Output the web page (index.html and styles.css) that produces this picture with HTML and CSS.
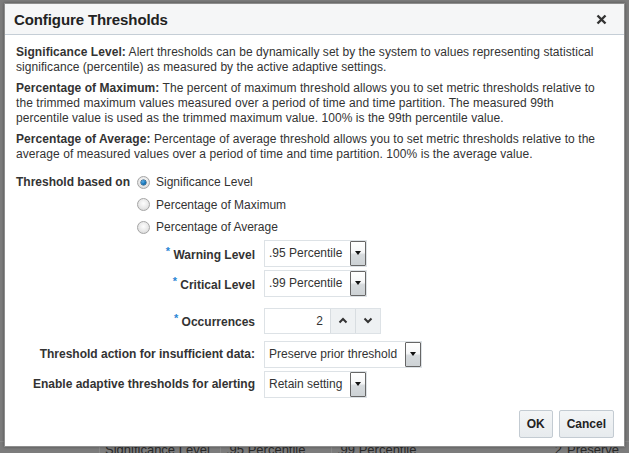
FILE: index.html
```html
<!DOCTYPE html>
<html>
<head>
<meta charset="utf-8">
<link rel="stylesheet" href="styles.css">
</head>
<body>
<div class="page">
  <div class="page-row">
    <span class="cell c1">Significance Level</span>
    <span class="cell c2">.95 Percentile</span>
    <span class="cell c3">.99 Percentile</span>
    <span class="cell c4">2</span>
    <span class="cell c5">Preserve</span>
  </div>
</div>
<div class="dialog">
  <div class="dlg-header">
    <span class="dlg-title">Configure Thresholds</span>
    <svg class="close" width="11" height="11" viewBox="0 0 11 11"><path d="M1.5 1.5 L9.5 9.5 M9.5 1.5 L1.5 9.5" stroke="#333" stroke-width="2.4" fill="none"/></svg>
  </div>
  <div class="dlg-body">
    <p class="desc"><b>Significance Level:</b> Alert thresholds can be dynamically set by the system to values representing statistical significance (percentile) as measured by the active adaptive settings.</p>
    <p class="desc"><b>Percentage of Maximum:</b> The percent of maximum threshold allows you to set metric thresholds relative to the trimmed maximum values measured over a period of time and time partition. The measured 99th percentile value is used as the trimmed maximum value. 100% is the 99th percentile value.</p>
    <p class="desc"><b>Percentage of Average:</b> Percentage of average threshold allows you to set metric thresholds relative to the average of measured values over a period of time and time partition. 100% is the average value.</p>

    <div class="basis">
      <span class="basis-label">Threshold based on</span>
      <div class="radios">
        <div class="radio-row"><span class="radio checked"></span><span>Significance Level</span></div>
        <div class="radio-row"><span class="radio"></span><span>Percentage of Maximum</span></div>
        <div class="radio-row"><span class="radio"></span><span>Percentage of Average</span></div>
      </div>
    </div>

    <div class="frow r-warn">
      <label class="flabel"><span class="req">*</span> Warning Level</label>
      <div class="select"><span class="sval">.95 Percentile</span><span class="sbtn"><span class="tri"></span></span></div>
    </div>
    <div class="frow r-crit">
      <label class="flabel"><span class="req">*</span> Critical Level</label>
      <div class="select"><span class="sval">.99 Percentile</span><span class="sbtn"><span class="tri"></span></span></div>
    </div>
    <div class="frow r-occ">
      <label class="flabel"><span class="req">*</span> Occurrences</label>
      <div class="spinner">
        <span class="spin-val">2</span>
        <span class="spin-btn"><svg width="10" height="7" viewBox="0 0 10 7"><path d="M1.5 5.5 L5 2 L8.5 5.5" stroke="#333" stroke-width="2" fill="none"/></svg></span>
        <span class="spin-btn"><svg width="10" height="7" viewBox="0 0 10 7"><path d="M1.5 1.5 L5 5 L8.5 1.5" stroke="#333" stroke-width="2" fill="none"/></svg></span>
      </div>
    </div>
    <div class="frow r-act">
      <label class="flabel">Threshold action for insufficient data:</label>
      <div class="select"><span class="sval">Preserve prior threshold</span><span class="sbtn"><span class="tri"></span></span></div>
    </div>
    <div class="frow r-en">
      <label class="flabel">Enable adaptive thresholds for alerting</label>
      <div class="select"><span class="sval">Retain setting</span><span class="sbtn"><span class="tri"></span></span></div>
    </div>
  </div>
  <div class="dlg-footer">
    <button class="btn">OK</button>
    <button class="btn">Cancel</button>
  </div>
</div>
</body>
</html>
```

FILE: styles.css
```css
html, body {
  margin: 0;
  padding: 0;
}
body {
  width: 629px;
  height: 453px;
  overflow: hidden;
  background: #7c7c7c;
  font-family: "Liberation Sans", Arial, sans-serif;
  font-size: 12px;
  color: #333;
  position: relative;
}
.page {
  padding-top: 441px;
}
.page-row {
  display: flex;
  height: 20px;
  border-top: 1px solid #888;
  color: #2a2a2a;
  line-height: 16px;
}
.cell {
  padding-left: 5px;
  border-left: 1px solid #8a8a8a;
  white-space: nowrap;
  font-size: 13px;
}
.c1 { margin-left: 99px; width: 115px; }
.c2 { width: 105px; }
.c3 { width: 200px; }
.c4 { width: 20px; border-left: none; text-align: right; }
.c5 { border-left: none; }

.dialog {
  position: absolute;
  left: 4px;
  top: 3px;
  width: 619px;
  height: 442px;
  background: #fff;
  border: 1px solid #8e8e8e;
  box-shadow: 0 0 3px rgba(0,0,0,0.35);
  display: flex;
  flex-direction: column;
}
.dlg-header {
  height: 30px;
  background: #f5f6f7;
  border-bottom: 1px solid #c5ced6;
  display: flex;
  align-items: center;
  justify-content: space-between;
  padding: 0 17px 0 9px;
  flex-shrink: 0;
}
.dlg-title {
  font-size: 15px;
  font-weight: bold;
  color: #222;
  letter-spacing: -0.1px;
}
.close {
  display: block;
}
.dlg-body {
  flex: 1;
  padding: 10px 20px 0 11px;
}
.desc {
  margin: 0 0 6px 0;
  line-height: 15px;
  font-size: 12px;
  color: #333;
  letter-spacing: 0.06px;
}
.basis {
  display: flex;
  margin-top: 9px;
}
.basis-label {
  width: 121px;
  flex-shrink: 0;
  font-weight: bold;
  color: #333;
  line-height: 22px;
  height: 22px;
}
.radios {
  display: flex;
  flex-direction: column;
}
.radio-row {
  display: flex;
  align-items: center;
  height: 22.5px;
  gap: 6px;
}
.radio {
  width: 11px;
  height: 11px;
  border-radius: 50%;
  border: 1px solid #a5a5a5;
  background: radial-gradient(circle at 50% 40%, #fdfdfd 0%, #e8e8e8 55%, #cfcfcf 100%);
  box-sizing: content-box;
  position: relative;
}
.radio.checked::after {
  content: "";
  position: absolute;
  left: 3px;
  top: 3px;
  width: 5px;
  height: 5px;
  border-radius: 50%;
  background: radial-gradient(circle at 40% 35%, #5aaee8 0%, #0b6bb0 60%, #084a7a 100%);
  box-shadow: 0 0 0 0.5px #0b3f66;
}

.frow {
  display: flex;
  align-items: center;
  gap: 9px;
}
.flabel {
  width: 239px;
  flex-shrink: 0;
  text-align: right;
  font-weight: bold;
  color: #333;
  white-space: nowrap;
}
.req {
  color: #2a86d5;
  font-size: 11px;
  vertical-align: 4px;
  font-weight: bold;
}
.r-warn { margin-top: 1px; }
.r-crit { margin-top: 3px; }
.r-occ { margin-top: 11px; }
.r-act { margin-top: 7px; }
.r-en { margin-top: 3px; }

.select {
  display: flex;
  align-items: center;
  height: 27px;
  box-sizing: border-box;
  border: 1px solid #dde2e6;
  background: #fff;
  padding-left: 4px;
  gap: 8px;
}
.sval {
  color: #333;
  white-space: nowrap;
}
.sbtn {
  width: 16px;
  height: 25px;
  box-sizing: border-box;
  border: 1px solid #666;
  border-radius: 1px;
  background: linear-gradient(to bottom, #ffffff 0%, #f6f7f8 45%, #d6dadd 55%, #cdd2d5 100%);
  display: flex;
  align-items: center;
  justify-content: center;
}
.tri {
  width: 0;
  height: 0;
  border-left: 3.5px solid transparent;
  border-right: 3.5px solid transparent;
  border-top: 4px solid #111;
}

.spinner {
  display: flex;
  height: 26px;
  box-sizing: border-box;
  border: 1px solid #dde2e6;
  background: #fff;
}
.spin-val {
  width: 58px;
  text-align: right;
  padding-right: 7px;
  line-height: 24px;
  color: #333;
}
.spin-btn {
  width: 24px;
  border-left: 1px solid #d8dde1;
  background: #eef1f3;
  display: flex;
  align-items: center;
  justify-content: center;
}

.dlg-footer {
  display: flex;
  justify-content: flex-end;
  gap: 6px;
  padding: 0 10px 8px 0;
  flex-shrink: 0;
}
.btn {
  font-family: "Liberation Sans", Arial, sans-serif;
  font-size: 12px;
  font-weight: bold;
  color: #222;
  height: 28px;
  padding: 0 7px;
  border: 1px solid #c3cbd2;
  border-radius: 2px;
  background: linear-gradient(to bottom, #f3f5f6, #e7ebee);
}
```
